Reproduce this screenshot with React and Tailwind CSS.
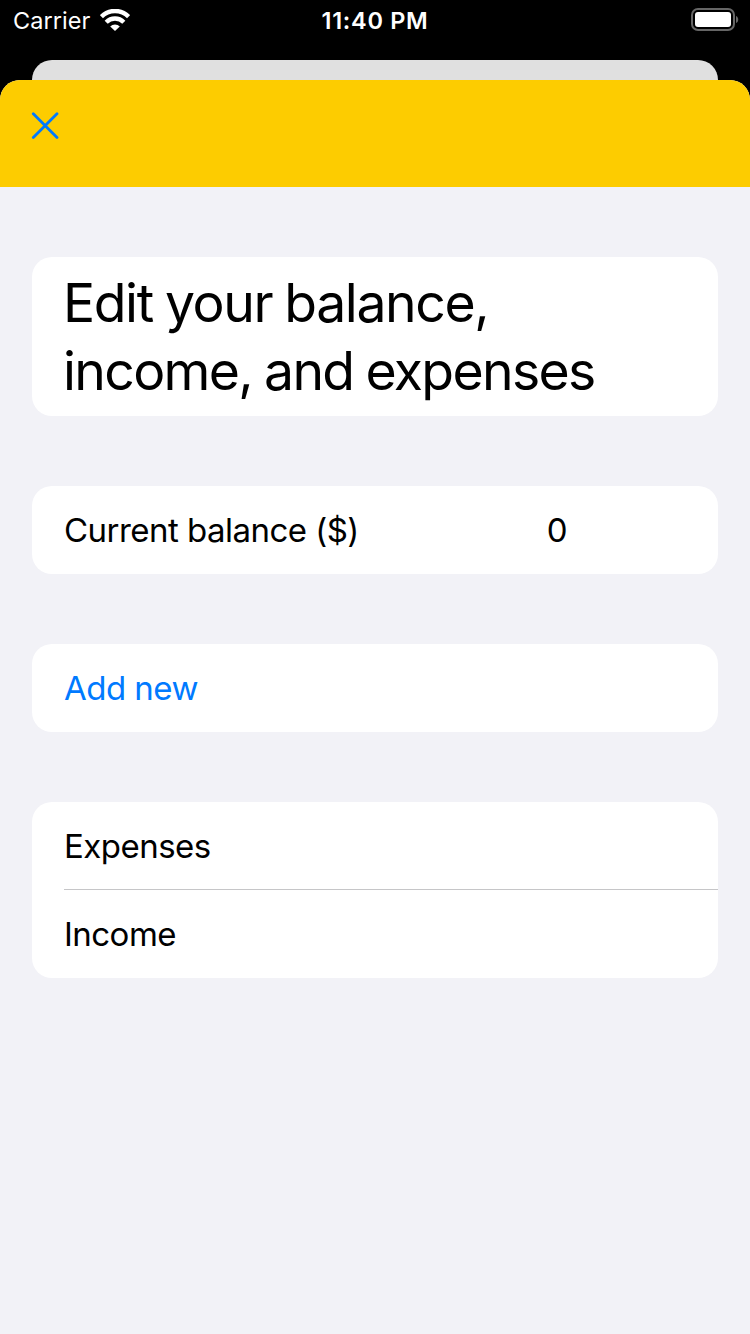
function Card({ className = "", children }) {
  return <section className={`mx-8 rounded-[20px] bg-white ${className}`}>{children}</section>;
}

function Row({ children, className = "" }) {
  return <div className={`flex h-[88px] items-center px-8 text-[33px] leading-[44px] tracking-[-0.53px] ${className}`}>{children}</div>;
}

export default function App() {
  return (
    <div className="flex h-[1334px] w-[750px] flex-col overflow-hidden bg-black font-['Inter',sans-serif] text-black">
      <header className="grid h-[60px] shrink-0 grid-cols-3 items-start text-white">
        <div className="flex h-10 items-center gap-[9px] pl-[13px]">
          <span className="w-[78px] pt-px text-[23.5px] leading-[40px] tracking-[0.05px]">Carrier</span>
          <svg className="h-[22px] w-[30px]" viewBox="0 0 30 22" fill="none" stroke="white" strokeWidth="4.4">
            <path d="M1.4 7.6a19.2 19.2 0 0 1 27.2 0M6.2 13.2a12.4 12.4 0 0 1 17.6 0" />
            <path d="M15 22l-4.8-4.6a6.8 6.8 0 0 1 9.6 0z" fill="white" stroke="none" />
          </svg>
        </div>
        <time className="h-10 text-center text-[23.5px] leading-[41px] font-[570] tracking-[0.7px]">11:40 PM</time>
        <div className="flex h-10 items-center justify-end pr-[11px]">
          <svg className="h-6 w-[48px]" viewBox="0 0 48 24">
            <rect x="1" y="1" width="42" height="21" rx="6" fill="none" stroke="#666" strokeWidth="2" />
            <rect x="4" y="4" width="36" height="15" rx="3" fill="white" />
            <path d="M45 8c3 1 3 6 0 7z" fill="#666" />
          </svg>
        </div>
      </header>
      <div className="mx-8 h-5 shrink-0 rounded-t-[20px] bg-[#e0e0e0]" />
      <main className="flex grow flex-col rounded-t-[20px] bg-[#f2f2f7]">
        <nav className="h-[107px] shrink-0 rounded-t-[20px] bg-[#fdcc00] pt-8 pl-[31px]">
          <button aria-label="Close" className="block">
            <svg className="size-7" viewBox="0 0 28 28" stroke="#007aff" strokeWidth="2.8" strokeLinecap="round">
              <path d="M2.3 1.8L26 25.5M26 1.8L2.3 25.5" />
            </svg>
          </button>
        </nav>
        <div className="flex flex-col gap-[70px] pt-[70px]">
          <Card className="h-[159px] pt-3 pr-8 pl-[31px]">
            <h1 className="text-[53.5px] leading-[68px] [word-spacing:-1.5px]">
              <span className="block tracking-[-1.4px]">Edit your balance,</span>
              <span className="block tracking-[-1.65px]">income, and expenses</span>
            </h1>
          </Card>
          <Card>
            <Row>
              <span>Current balance ($)</span>
              <span className="ml-auto pr-[119px]">0</span>
            </Row>
          </Card>
          <Card>
            <Row className="text-[#007aff]">Add new</Row>
          </Card>
          <Card>
            <Row>Expenses</Row>
            <div className="-mt-px ml-8 h-px bg-[#c6c6c8]" />
            <Row>Income</Row>
          </Card>
        </div>
      </main>
    </div>
  );
}
